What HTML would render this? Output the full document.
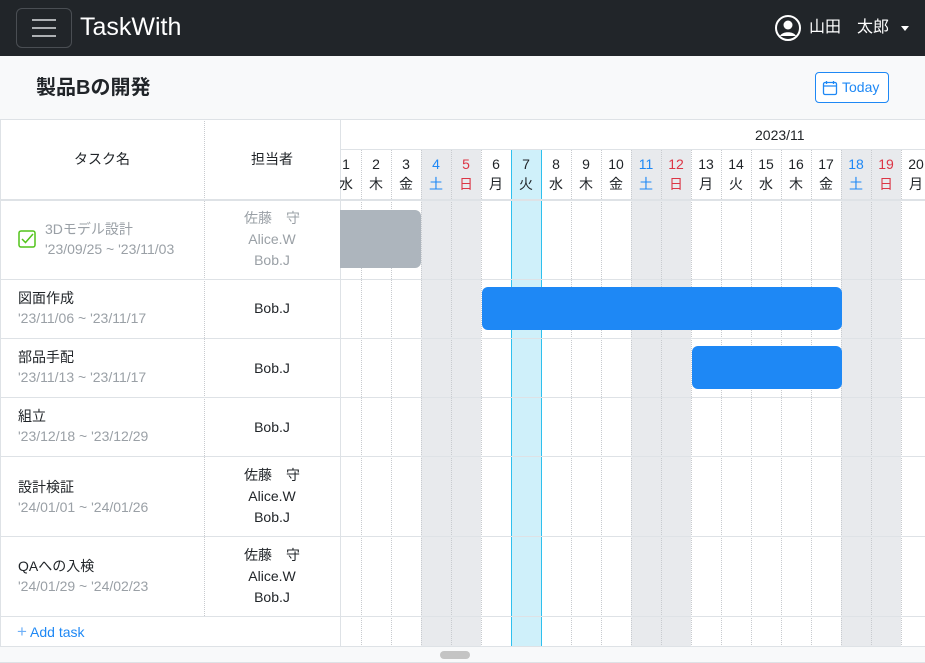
<!DOCTYPE html>
<html><head><meta charset="utf-8"><style>
*{box-sizing:border-box;margin:0;padding:0}
body{width:925px;height:663px;overflow:hidden;font-family:"Liberation Sans","Noto Sans CJK JP",sans-serif;background:#fff;position:relative;color:#212529}
.a{position:absolute}
.nav{left:0;top:0;width:925px;height:56px;background:#212529}
.hd{left:0;top:56px;width:925px;height:63px;background:#f8f9fa}
.vl{position:absolute;width:0;border-left:1px dotted #c8cbcf}
.hl{position:absolute;height:1px;background:#dee2e6;left:0;width:925px}
.day{position:absolute;top:149px;width:30px;height:50px;text-align:center;font-size:14px;line-height:20px;padding-top:5px}
.tn{position:absolute;left:18px;font-size:14px;line-height:20px}
.dt{color:#9aa0a6}
.as{position:absolute;left:204px;width:136px;text-align:center;font-size:14px;line-height:21px}
</style></head><body>
<div class="a nav"></div>
<div class="a" style="left:16px;top:8px;width:56px;height:40px;border:1px solid #4a4e53;border-radius:6px"></div>
<div class="a" style="left:32px;top:19px;width:24px;height:2px;background:#adb0b3"></div>
<div class="a" style="left:32px;top:27px;width:24px;height:2px;background:#adb0b3"></div>
<div class="a" style="left:32px;top:35px;width:24px;height:2px;background:#adb0b3"></div>
<div class="a" style="left:80px;top:12px;font-size:25px;color:#fff;line-height:31px">TaskWith</div>
<svg class="a" style="left:774px;top:14px" width="28" height="28" viewBox="0 0 28 28"><circle cx="14" cy="14" r="12" fill="none" stroke="#fff" stroke-width="2"/><circle cx="14" cy="11" r="4.5" fill="#fff"/><path d="M6 22c2-5 14-5 16 0" fill="#fff"/></svg>
<div class="a" style="left:809px;top:18px;font-size:16px;color:#fff;line-height:20px">山田　太郎</div>
<div class="a" style="left:901px;top:26px;border:4px solid transparent;border-top:5px solid #fff;border-bottom:0"></div>
<div class="a hd"></div>
<div class="a" style="left:36px;top:75px;font-size:20px;font-weight:bold;line-height:26px">製品Bの開発</div>
<div class="a" style="left:815px;top:72px;width:74px;height:31px;border:1px solid #1e88f5;border-radius:4px;background:#fff;color:#1e88f5;font-size:14px;line-height:29px;padding-left:26px">Today</div>
<svg class="a" style="left:822px;top:80px" width="16" height="16" viewBox="0 0 16 16"><rect x="1.5" y="2.5" width="13" height="12" rx="1.5" fill="none" stroke="#1e88f5" stroke-width="1.3"/><path d="M1.5 6h13M4.5 1v3M11.5 1v3" stroke="#1e88f5" stroke-width="1.3"/></svg>
<div class="a" style="left:421px;top:149px;width:60px;height:498px;background:#e8eaed"></div>
<div class="a" style="left:631px;top:149px;width:60px;height:498px;background:#e8eaed"></div>
<div class="a" style="left:841px;top:149px;width:60px;height:498px;background:#e8eaed"></div>
<div class="a" style="left:511px;top:149px;width:31px;height:498px;background:#cff0fa;border:1px solid #2ec0ee"></div>
<div class="a" style="left:0;top:119px;width:1px;height:528px;background:#dee2e6"></div>
<div class="vl" style="left:204px;top:119px;height:497px"></div>
<div class="a" style="left:340px;top:119px;width:1px;height:528px;background:#dee2e6"></div>
<div class="vl" style="left:361px;top:149px;height:498px"></div><div class="vl" style="left:391px;top:149px;height:498px"></div><div class="vl" style="left:421px;top:149px;height:498px"></div><div class="vl" style="left:451px;top:149px;height:498px"></div><div class="vl" style="left:481px;top:149px;height:498px"></div><div class="vl" style="left:571px;top:149px;height:498px"></div><div class="vl" style="left:601px;top:149px;height:498px"></div><div class="vl" style="left:631px;top:149px;height:498px"></div><div class="vl" style="left:661px;top:149px;height:498px"></div><div class="vl" style="left:691px;top:149px;height:498px"></div><div class="vl" style="left:721px;top:149px;height:498px"></div><div class="vl" style="left:751px;top:149px;height:498px"></div><div class="vl" style="left:781px;top:149px;height:498px"></div><div class="vl" style="left:811px;top:149px;height:498px"></div><div class="vl" style="left:841px;top:149px;height:498px"></div><div class="vl" style="left:871px;top:149px;height:498px"></div><div class="vl" style="left:901px;top:149px;height:498px"></div>
<div class="hl" style="top:119px"></div>
<div class="hl" style="top:149px;left:340px;width:585px"></div>
<div class="hl" style="top:199px;height:2px"></div>
<div class="hl" style="top:279px"></div><div class="hl" style="top:338px"></div><div class="hl" style="top:397px"></div><div class="hl" style="top:456px"></div><div class="hl" style="top:536px"></div><div class="hl" style="top:616px"></div><div class="hl" style="top:646px"></div>
<div class="a" style="left:0;top:647px;width:925px;height:16px;background:#f8f9fa;border-bottom:1px solid #dee2e6"></div>
<div class="a" style="left:440px;top:651px;width:30px;height:8px;background:#c4c4c4;border-radius:4px"></div>
<div class="a" style="left:0;top:149px;width:204px;text-align:center;font-size:14px;line-height:20px">タスク名</div>
<div class="a" style="left:204px;top:149px;width:136px;text-align:center;font-size:14px;line-height:20px">担当者</div>
<div class="a" style="left:755px;top:125px;font-size:14px;line-height:20px">2023/11</div>
<div style="position:absolute;left:340px;top:0;width:585px;height:663px;overflow:hidden">
<div class="day" style="left:-9px">1<br>水</div><div class="day" style="left:21px">2<br>木</div><div class="day" style="left:51px">3<br>金</div><div class="day" style="left:81px;color:#1e88f5">4<br>土</div><div class="day" style="left:111px;color:#dc3545">5<br>日</div><div class="day" style="left:141px">6<br>月</div><div class="day" style="left:171px">7<br>火</div><div class="day" style="left:201px">8<br>水</div><div class="day" style="left:231px">9<br>木</div><div class="day" style="left:261px">10<br>金</div><div class="day" style="left:291px;color:#1e88f5">11<br>土</div><div class="day" style="left:321px;color:#dc3545">12<br>日</div><div class="day" style="left:351px">13<br>月</div><div class="day" style="left:381px">14<br>火</div><div class="day" style="left:411px">15<br>水</div><div class="day" style="left:441px">16<br>木</div><div class="day" style="left:471px">17<br>金</div><div class="day" style="left:501px;color:#1e88f5">18<br>土</div><div class="day" style="left:531px;color:#dc3545">19<br>日</div><div class="day" style="left:561px">20<br>月</div>
<div class="a" style="left:-10px;top:210px;width:91px;height:58px;background:#adb5bd;border-radius:6px"></div>
<div class="a" style="left:142px;top:287px;width:360px;height:43px;background:#1e88f5;border-radius:6px"></div>
<div class="a" style="left:352px;top:346px;width:150px;height:43px;background:#1e88f5;border-radius:6px"></div>
</div>
<svg class="a" style="left:18px;top:230px" width="18" height="18" viewBox="0 0 18 18"><rect x="1" y="1" width="16" height="16" rx="2" fill="none" stroke="#52c41a" stroke-width="1.5"/><path d="M4 9l3.5 3.5L15 4" fill="none" stroke="#52c41a" stroke-width="1.5"/></svg>
<div class="tn dt" style="left:45px;top:219px">3Dモデル設計<br>'23/09/25 ~ '23/11/03</div>
<div class="as dt" style="top:208px">佐藤　守<br>Alice.W<br>Bob.J</div>
<div class="tn" style="top:288px">図面作成<br><span class="dt">'23/11/06 ~ '23/11/17</span></div>
<div class="as" style="top:298px">Bob.J</div>
<div class="tn" style="top:347px">部品手配<br><span class="dt">'23/11/13 ~ '23/11/17</span></div>
<div class="as" style="top:358px">Bob.J</div>
<div class="tn" style="top:406px">組立<br><span class="dt">'23/12/18 ~ '23/12/29</span></div>
<div class="as" style="top:417px">Bob.J</div>
<div class="tn" style="top:477px">設計検証<br><span class="dt">'24/01/01 ~ '24/01/26</span></div>
<div class="as" style="top:465px">佐藤　守<br>Alice.W<br>Bob.J</div>
<div class="tn" style="top:556px">QAへの入検<br><span class="dt">'24/01/29 ~ '24/02/23</span></div>
<div class="as" style="top:545px">佐藤　守<br>Alice.W<br>Bob.J</div>
<div class="a" style="left:17px;top:622px;font-size:14px;color:#1e88f5;line-height:20px"><span style="font-size:17px;color:#6fb0f7">+</span> Add task</div>
</body></html>
